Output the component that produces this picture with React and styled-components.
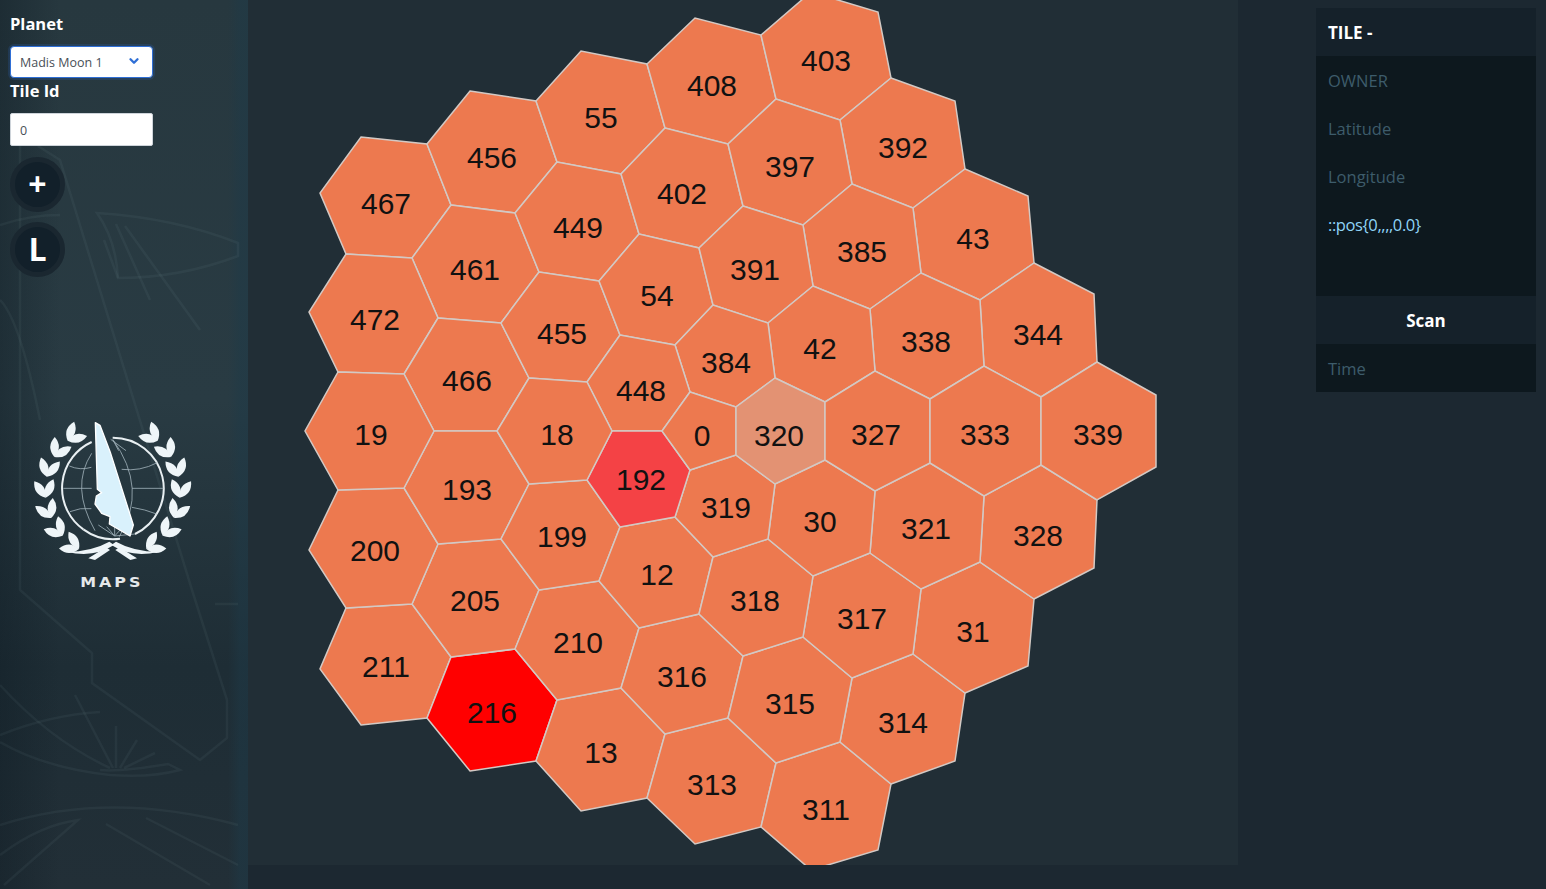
import React from 'react';
import styled, { createGlobalStyle } from 'styled-components';
import { ChevronDown } from 'lucide-react';

const GlobalStyle = createGlobalStyle`
  html, body {
    margin: 0;
    padding: 0;
    background: #1c2831;
  }
  * {
    box-sizing: border-box;
  }
`;

const AXIS = 862; // polygons mirror around y = 431
const LABEL_AXIS = 871;

// top half of the map, the lower half is the mirror image
const mirrored = [
  { id: 467, mirror: 211, x: 386, y: 204, pts: [[361,137],[427,144],[451,205],[412,258],[346,254],[320,193]] },
  { id: 456, mirror: 216, x: 492, y: 158, pts: [[470,91],[536,101],[557,162],[515,213],[451,205],[427,144]] },
  { id: 55, mirror: 13, x: 601, y: 118, pts: [[536,101],[581,51],[647,64],[665,128],[621,174],[557,162]] },
  { id: 408, mirror: 313, x: 712, y: 86, pts: [[647,64],[695,18],[761,35],[776,99],[728,144],[665,128]] },
  { id: 403, mirror: 311, x: 826, y: 61, pts: [[761,35],[811,-8],[878,12],[891,78],[840,120],[776,99]] },
  { id: 392, mirror: 314, x: 903, y: 148, pts: [[891,78],[955,101],[965,169],[913,208],[852,184],[840,120]] },
  { id: 43, mirror: 31, x: 973, y: 239, pts: [[965,169],[1028,196],[1034,263],[980,300],[921,273],[913,208]] },
  { id: 344, mirror: 328, x: 1038, y: 335, pts: [[1034,263],[1094,294],[1097,362],[1041,397],[984,366],[980,300]] },
  { id: 461, mirror: 205, x: 475, y: 270, pts: [[451,205],[515,213],[539,272],[501,323],[438,318],[412,258]] },
  { id: 449, mirror: 210, x: 578, y: 228, pts: [[515,213],[557,162],[621,174],[639,234],[599,281],[539,272]] },
  { id: 402, mirror: 316, x: 682, y: 194, pts: [[621,174],[665,128],[728,144],[743,206],[699,248],[639,234]] },
  { id: 397, mirror: 315, x: 790, y: 167, pts: [[728,144],[776,99],[840,120],[852,184],[803,225],[743,206]] },
  { id: 385, mirror: 317, x: 862, y: 252, pts: [[803,225],[852,184],[913,208],[921,273],[870,309],[813,286]] },
  { id: 338, mirror: 321, x: 926, y: 342, pts: [[870,309],[921,273],[980,300],[984,366],[930,399],[875,371]] },
  { id: 472, mirror: 200, x: 375, y: 320, pts: [[346,254],[412,258],[438,318],[404,374],[338,372],[309,312]] },
  { id: 466, mirror: 193, x: 467, y: 381, pts: [[438,318],[501,323],[529,378],[497,431],[434,431],[404,374]] },
  { id: 455, mirror: 199, x: 562, y: 334, pts: [[501,323],[539,272],[599,281],[620,335],[587,382],[529,378]] },
  { id: 54, mirror: 12, x: 657, y: 296, pts: [[599,281],[639,234],[699,248],[713,305],[675,345],[620,335]] },
  { id: 391, mirror: 318, x: 755, y: 270, pts: [[699,248],[743,206],[803,225],[813,286],[768,323],[713,305]] },
  { id: 42, mirror: 30, x: 820, y: 349, pts: [[768,323],[813,286],[870,309],[875,371],[825,402],[775,378]] },
  { id: 384, mirror: 319, x: 726, y: 363, pts: [[675,345],[713,305],[768,323],[775,378],[736,407],[690,392]] },
  { id: 448, mirror: 192, x: 641, y: 391, pts: [[587,382],[620,335],[675,345],[690,392],[662,431],[612,431]] },
];

const middle = [
  { id: 19, x: 371, y: 435, pts: [[338,372],[404,374],[434,431],[404,488],[338,490],[305,431]] },
  { id: 18, x: 557, y: 435, pts: [[529,378],[587,382],[612,431],[587,480],[529,484],[497,431]] },
  { id: 0, x: 702, y: 436, pts: [[690,392],[736,407],[736,455],[690,470],[662,431]] },
  { id: 320, x: 779, y: 436, pts: [[775,378],[825,402],[825,460],[775,484],[736,455],[736,407]] },
  { id: 327, x: 876, y: 435, pts: [[825,402],[875,371],[930,399],[930,463],[875,491],[825,460]] },
  { id: 333, x: 985, y: 435, pts: [[930,399],[984,366],[1041,397],[1041,465],[984,496],[930,463]] },
  { id: 339, x: 1098, y: 435, pts: [[1097,362],[1156,395],[1156,467],[1097,500],[1041,465],[1041,397]] },
];

const tiles = [
  ...mirrored.map(({ id, x, y, pts }) => ({ id, x, y, pts })),
  ...mirrored.map(({ mirror, x, y, pts }) => ({
    id: mirror,
    x,
    y: LABEL_AXIS - y,
    pts: pts.map(([px, py]) => [px, AXIS - py]),
  })),
  ...middle,
];

const kinds = { 320: 'hover', 192: 'near', 216: 'active' };

const hexFill = {
  base: '#ed794f',
  hover: '#e39273',
  near: '#f44245',
  active: '#ff0000',
};

const Page = styled.div`
  display: flex;
  align-items: flex-start;
  width: 100%;
  height: 889px;
  overflow: hidden;
  background: #1c2831;
  font-family: "Open Sans", "Noto Sans", sans-serif;
`;

const Sidebar = styled.aside`
  position: relative;
  flex: 0 0 248px;
  height: 889px;
  padding: 14px 10px 0;
  overflow: hidden;
  background:
    linear-gradient(90deg, rgba(12, 24, 32, 0.35) 0, rgba(12, 24, 32, 0) 60px),
    linear-gradient(90deg, rgba(30, 58, 72, 0) 228px, rgba(30, 58, 72, 0.5) 240px),
    linear-gradient(180deg, #27383f 0, #293b43 45%, #1e2d35 75%, #222f37 100%);
`;

const Backdrop = styled.svg`
  position: absolute;
  top: 0;
  left: 0;
  fill: none;
  stroke: rgba(190, 215, 225, 0.055);
  stroke-width: 2.5;
`;

const Controls = styled.div`
  position: relative;
  display: flex;
  flex-direction: column;
  width: 143px;
`;

const FieldLabel = styled.label`
  display: block;
  height: 24px;
  color: #fff;
  font-size: 16.5px;
  font-weight: 700;
  line-height: 20px;
`;

const SelectWrap = styled.div`
  position: relative;
  height: 32px;
  margin-top: 8px;
  margin-bottom: 3px;
`;

const PlanetSelect = styled.select`
  appearance: none;
  display: block;
  width: 100%;
  height: 100%;
  padding: 1px 0 0 9px;
  border: 1.5px solid #2f6fd6;
  border-radius: 4px;
  outline: none;
  background: #fff;
  box-shadow: 0 0 0 2px rgba(47, 111, 214, 0.18);
  color: #495057;
  font-family: inherit;
  font-size: 12.5px;
`;

const SelectArrow = styled(ChevronDown)`
  position: absolute;
  top: 8px;
  right: 12px;
  color: #2f6fd6;
  pointer-events: none;
`;

const TileInput = styled.input`
  display: block;
  width: 100%;
  height: 33px;
  margin-top: 8px;
  padding: 2px 9px 0;
  border: 1px solid #ced4da;
  border-radius: 2px;
  background: #fff;
  color: #495057;
  font-family: inherit;
  font-size: 12.5px;
`;

const RoundButton = styled.button`
  display: flex;
  align-items: center;
  justify-content: center;
  width: 55px;
  height: 55px;
  margin-top: ${(p) => p.$gap}px;
  padding: 0 0 2px;
  border: 5px solid #1a2730;
  border-radius: 50%;
  background: #12202a;
  color: #fff;
  font-family: inherit;
  font-size: 32px;
  font-weight: 700;
  line-height: 1;
`;

const Emblem = styled.div`
  position: absolute;
  top: 410px;
  left: 20px;
  display: flex;
  flex-direction: column;
  align-items: center;
  width: 180px;
`;

const EmblemArt = styled.svg`
  display: block;
  width: 180px;
  height: 160px;
`;

const EmblemCaption = styled.div`
  margin-top: 4px;
  margin-left: 3px;
  color: #e4e8ea;
  font-family: "DejaVu Sans", sans-serif;
  font-size: 13.5px;
  font-weight: 700;
  letter-spacing: 2.5px;
  line-height: 17px;
  transform: scaleX(1.18);
`;

const MapArea = styled.main`
  flex: 0 0 990px;
  height: 865px;
  background: #212e36;
`;

const MapSvg = styled.svg`
  display: block;
  width: 990px;
  height: 865px;
`;

const Hex = styled.polygon`
  fill: ${(p) => hexFill[p.$kind]};
  stroke: #d3c9c4;
  stroke-width: 1.5;
`;

const HexLabel = styled.text`
  fill: #111;
  font-family: "Liberation Sans", Arial, sans-serif;
  font-size: 30px;
  text-anchor: middle;
`;

const Side = styled.section`
  flex: 1;
  padding: 8px 10px 0 78px;
`;

const InfoPanel = styled.div`
  display: flex;
  flex-direction: column;
  width: 220px;
  background: #0d181e;
`;

const PanelHead = styled.div`
  height: 48px;
  padding: 0 12px;
  background: #15212a;
  color: #fff;
  font-size: 17px;
  font-weight: 700;
  line-height: 49px;
  text-align: ${(p) => (p.$center ? 'center' : 'left')};
`;

const PanelRow = styled.div`
  height: 48px;
  padding: 0 12px;
  color: ${(p) => (p.$code ? '#8fd4f7' : '#3d5c6b')};
  font-size: 16.5px;
  letter-spacing: ${(p) => (p.$code ? '-0.4px' : '0')};
  line-height: 50px;
`;

// one laurel leaf from a stem point, in direction (dx, dy)
const leafPath = (sx, sy, dx, dy, len, w) => {
  const mx = sx + dx * len * 0.5;
  const my = sy + dy * len * 0.5;
  const nx = -dy * w;
  const ny = dx * w;
  return `M${sx} ${sy}Q${mx + nx} ${my + ny} ${sx + dx * len} ${sy + dy * len}Q${mx - nx} ${my - ny} ${sx} ${sy}Z`;
};

const leaves = (() => {
  const out = [];
  for (let i = 0; i < 7; i++) {
    const a = ((132 + i * 18) * Math.PI) / 180;
    const sx = 278 + 202 * Math.cos(a);
    const sy = 242 - 202 * Math.sin(a);
    const tx = Math.sin(a);
    const ty = Math.cos(a);
    const nx = Math.cos(a);
    const ny = -Math.sin(a);
    const k = Math.hypot(1, 0.55);
    out.push(leafPath(sx, sy, (tx - 0.55 * nx) / k, (ty - 0.55 * ny) / k, 60, 26));
    out.push(leafPath(sx, sy, (tx + 0.55 * nx) / k, (ty + 0.55 * ny) / k, 60, 26));
  }
  return out;
})();

const EmblemMark = () => (
  <EmblemArt viewBox="0 0 540 480">
    <g fill="none" stroke="#e8eff2" strokeWidth="6">
      <path d="M215 96A152 152 0 0 0 190 358" />
      <path d="M278 83A152 152 0 0 1 345 372" strokeWidth="6" />
      <path d="M190 358A152 152 0 0 0 300 386" />
    </g>
    <g fill="none" stroke="#9fb0b8" strokeWidth="2.5">
      <path d="M130 235H215M336 235H430" />
      <path d="M148 168Q180 182 214 172M305 178Q360 185 412 158" />
      <path d="M150 305Q180 292 214 296M336 292Q375 298 410 312" />
      <path d="M215 130Q150 230 225 362" />
      <path d="M278 88Q385 235 298 380" />
      <path d="M235 345L284 378L345 372M260 350L284 378M284 345V378M305 355L284 378" />
      <path d="M272 88L318 122M280 92L296 122" />
    </g>
    <path
      d="M226 38L240 46L272 130L340 345L330 378L268 342L270 320L245 310L225 282L229 258L245 248L232 238Z"
      fill="#d9f1fc"
      stroke="#ffffff"
      strokeWidth="4"
      strokeLinejoin="round"
    />
    <g fill="#eef5f8">
      {leaves.map((d) => (
        <path key={d} d={d} />
      ))}
      <g transform="matrix(-1 0 0 1 556 0)">
        {leaves.map((d) => (
          <path key={d} d={d} />
        ))}
      </g>
      <path d="M140 425Q215 425 268 395L282 405Q220 445 140 425Z" />
      <path d="M416 425Q341 425 288 395L274 405Q336 445 416 425Z" />
      <path d="M205 445L258 412L270 420L225 450Z" />
      <path d="M351 445L298 412L286 420L331 450Z" />
    </g>
  </EmblemArt>
);

const BackdropLines = () => (
  <Backdrop width="248" height="889" viewBox="0 0 248 889">
    <path d="M20 146V590L92 653V683L200 760L227 738V700L192 590L60 160L38 146" />
    <path d="M97 213Q175 218 238 243V256Q180 278 118 278Q116 240 97 213Z" />
    <path d="M118 278L104 240M116 224L150 300M125 226L200 330" />
    <path d="M0 225Q30 215 60 215M0 300Q20 320 40 420" />
    <path d="M0 735Q50 715 100 712M0 742Q45 768 110 775Q150 778 180 770L168 764Q120 772 100 770" />
    <path d="M0 685Q50 740 110 768M75 695L113 768M116 726V768M137 740L120 768M155 753L124 768" />
    <path d="M0 825Q110 790 238 825M0 855Q40 825 78 820L4 885M106 824L210 885M146 818L238 865" />
    <path d="M215 604H238" />
  </Backdrop>
);

const App = () => (
  <Page>
    <GlobalStyle />
    <Sidebar>
      <BackdropLines />
      <Controls>
        <FieldLabel>Planet</FieldLabel>
        <SelectWrap>
          <PlanetSelect defaultValue="Madis Moon 1">
            <option>Madis Moon 1</option>
          </PlanetSelect>
          <SelectArrow size={14} strokeWidth={4} />
        </SelectWrap>
        <FieldLabel>Tile Id</FieldLabel>
        <TileInput defaultValue="0" />
        <RoundButton $gap={11}>+</RoundButton>
        <RoundButton $gap={10}>L</RoundButton>
      </Controls>
      <Emblem>
        <EmblemMark />
        <EmblemCaption>MAPS</EmblemCaption>
      </Emblem>
    </Sidebar>
    <MapArea>
      <MapSvg viewBox="248 0 990 865">
        {tiles.map((t) => (
          <Hex
            key={t.id}
            $kind={kinds[t.id] || 'base'}
            points={t.pts.map((p) => p.join(',')).join(' ')}
          />
        ))}
        {tiles.map((t) => (
          <HexLabel key={t.id} x={t.x} y={t.y + 9.5}>
            {t.id}
          </HexLabel>
        ))}
      </MapSvg>
    </MapArea>
    <Side>
      <InfoPanel>
        <PanelHead>TILE -</PanelHead>
        <PanelRow>OWNER</PanelRow>
        <PanelRow>Latitude</PanelRow>
        <PanelRow>Longitude</PanelRow>
        <PanelRow $code>::pos{'{'}0,,,,0.0{'}'}</PanelRow>
        <PanelRow />
        <PanelHead $center>Scan</PanelHead>
        <PanelRow>Time</PanelRow>
      </InfoPanel>
    </Side>
  </Page>
);

export default App;
